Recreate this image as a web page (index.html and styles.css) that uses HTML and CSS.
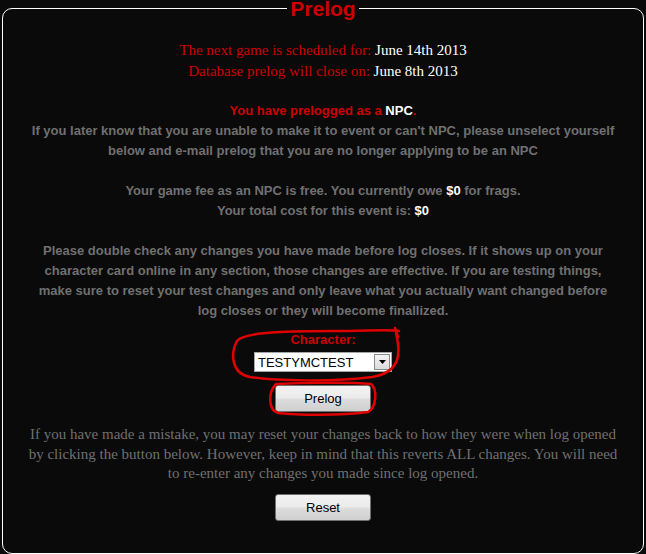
FILE: index.html
```html
<!DOCTYPE html>
<html lang="en">
<head>
    <meta charset="UTF-8">
    <title>Prelog</title>
    <link rel="stylesheet" href="styles.css">
</head>
<body>
    <fieldset class="prelog">
        <legend>Prelog</legend>

        <p class="dates">
            <span class="red">The next game is scheduled for:</span> June 14th 2013<br>
            <span class="red">Database prelog will close on:</span> June 8th 2013
        </p>

        <p class="note">
            <span class="alert">You have prelogged as a <span class="white">NPC</span>.</span><br>
            If you later know that you are unable to make it to event or can't NPC, please unselect yourself below and e-mail prelog that you are no longer applying to be an NPC
        </p>

        <p class="note">
            Your game fee as an NPC is free. You currently owe <span class="white">$0</span> for frags.<br>
            Your total cost for this event is: <span class="white">$0</span>
        </p>

        <p class="note checks">
            Please double check any changes you have made before log closes. If it shows up on your character card online in any section, those changes are effective. If you are testing things, make sure to reset your test changes and only leave what you actually want changed before log closes or they will become finallized.
        </p>

        <form class="prelog-form" onsubmit="return false;">
            <label class="char-label" for="character">Character:</label>
            <div class="select-wrap">
                <select id="character" class="char-select">
                    <option>TESTYMCTEST</option>
                </select>
                <span class="select-arrow">
                    <svg width="7" height="4" viewBox="0 0 7 4"><path d="M0 0 L7 0 L3.5 4 Z" fill="#000"/></svg>
                </span>
            </div>
            <button class="btn prelog-btn" type="submit">Prelog</button>

            <!-- red marker circles drawn over the form -->
            <svg class="marks" width="200" height="95" viewBox="0 0 200 95">
                <path d="M173 8 C177 25, 180 47, 149 52 C112 57, 52 56, 27 52 C7 48, 8 27, 14 16 C20 6, 77 6, 112 6 C142 6, 167 4, 176 6" />
                <path d="M172 3 L175 12" />
                <path d="M53 59 C77 58, 127 57, 148 59 C155 65, 153 83, 145 87 C117 91, 72 90, 55 88 C45 85, 45 67, 53 59" />
            </svg>
        </form>

        <p class="reset-note">
            If you have made a mistake, you may reset your changes back to how they were when log opened by clicking the button below. However, keep in mind that this reverts ALL changes. You will need to re-enter any changes you made since log opened.
        </p>

        <button class="btn" type="button">Reset</button>
    </fieldset>
</body>
</html>
```

FILE: styles.css
```css
body {
    margin: 0;
    background: #0a0a0a;
    font-family: "Liberation Sans", Arial, sans-serif;
}

.prelog {
    margin: 0 2px;
    padding: 23px 20px 32px;
    border: 1px solid #fff;
    border-radius: 10px;
    text-align: center;
    min-width: 0;
}

.prelog legend {
    margin: 0 auto;
    padding: 0 3px;
    font: bold 21px/17px "Liberation Sans", Arial, sans-serif;
    color: #cc0000;
}

p {
    margin: 0 0 20px;
}

.dates {
    margin-bottom: 19px;
    font: 15px/21px "Liberation Serif", "Times New Roman", serif;
    color: #fff;
}

.red {
    color: #cc0000;
}

.white {
    color: #fff;
}

.note {
    font-size: 13px;
    font-weight: bold;
    line-height: 20px;
    color: #707070;
}

.checks {
    max-width: 572px;
    margin-left: auto;
    margin-right: auto;
}

.alert {
    color: #cc0000;
}

.prelog-form {
    position: relative;
    margin: -11px 0 13px;
    display: flex;
    flex-direction: column;
    align-items: center;
}

.char-label {
    font-size: 13px;
    font-weight: bold;
    line-height: 20px;
    color: #cc0000;
}

.select-wrap {
    position: relative;
    margin-top: 2px;
}

.char-select {
    appearance: none;
    -webkit-appearance: none;
    width: 138px;
    height: 20px;
    margin: 0;
    padding: 0 0 0 3px;
    border: 1px solid #a5a5a5;
    border-radius: 0;
    background: #fff;
    font: 13px "Liberation Sans", Arial, sans-serif;
    color: #000;
    display: block;
}

.select-arrow {
    position: absolute;
    top: 2px;
    right: 2px;
    width: 14px;
    height: 14px;
    border: 1px solid #8a8a8a;
    background: linear-gradient(#f4f4f4, #dcdcdc);
    display: flex;
    align-items: center;
    justify-content: center;
    pointer-events: none;
}

.btn {
    width: 96px;
    height: 27px;
    padding: 0;
    border: 1px solid #707070;
    border-radius: 3px;
    background: linear-gradient(#f2f2f2 0%, #ebebeb 48%, #dddddd 52%, #cfcfcf 100%);
    font: 13px "Liberation Sans", Arial, sans-serif;
    color: #000;
}

.prelog-btn {
    margin-top: 13px;
}

.marks {
    position: absolute;
    top: -5px;
    left: 50%;
    margin-left: -100px;
    overflow: visible;
    pointer-events: none;
}

.marks path {
    fill: none;
    stroke: #e00000;
    stroke-width: 2.5;
    stroke-linecap: round;
}

.reset-note {
    margin-bottom: 10px;
    font: 15px/19.5px "Liberation Serif", "Times New Roman", serif;
    color: #707070;
}
```
